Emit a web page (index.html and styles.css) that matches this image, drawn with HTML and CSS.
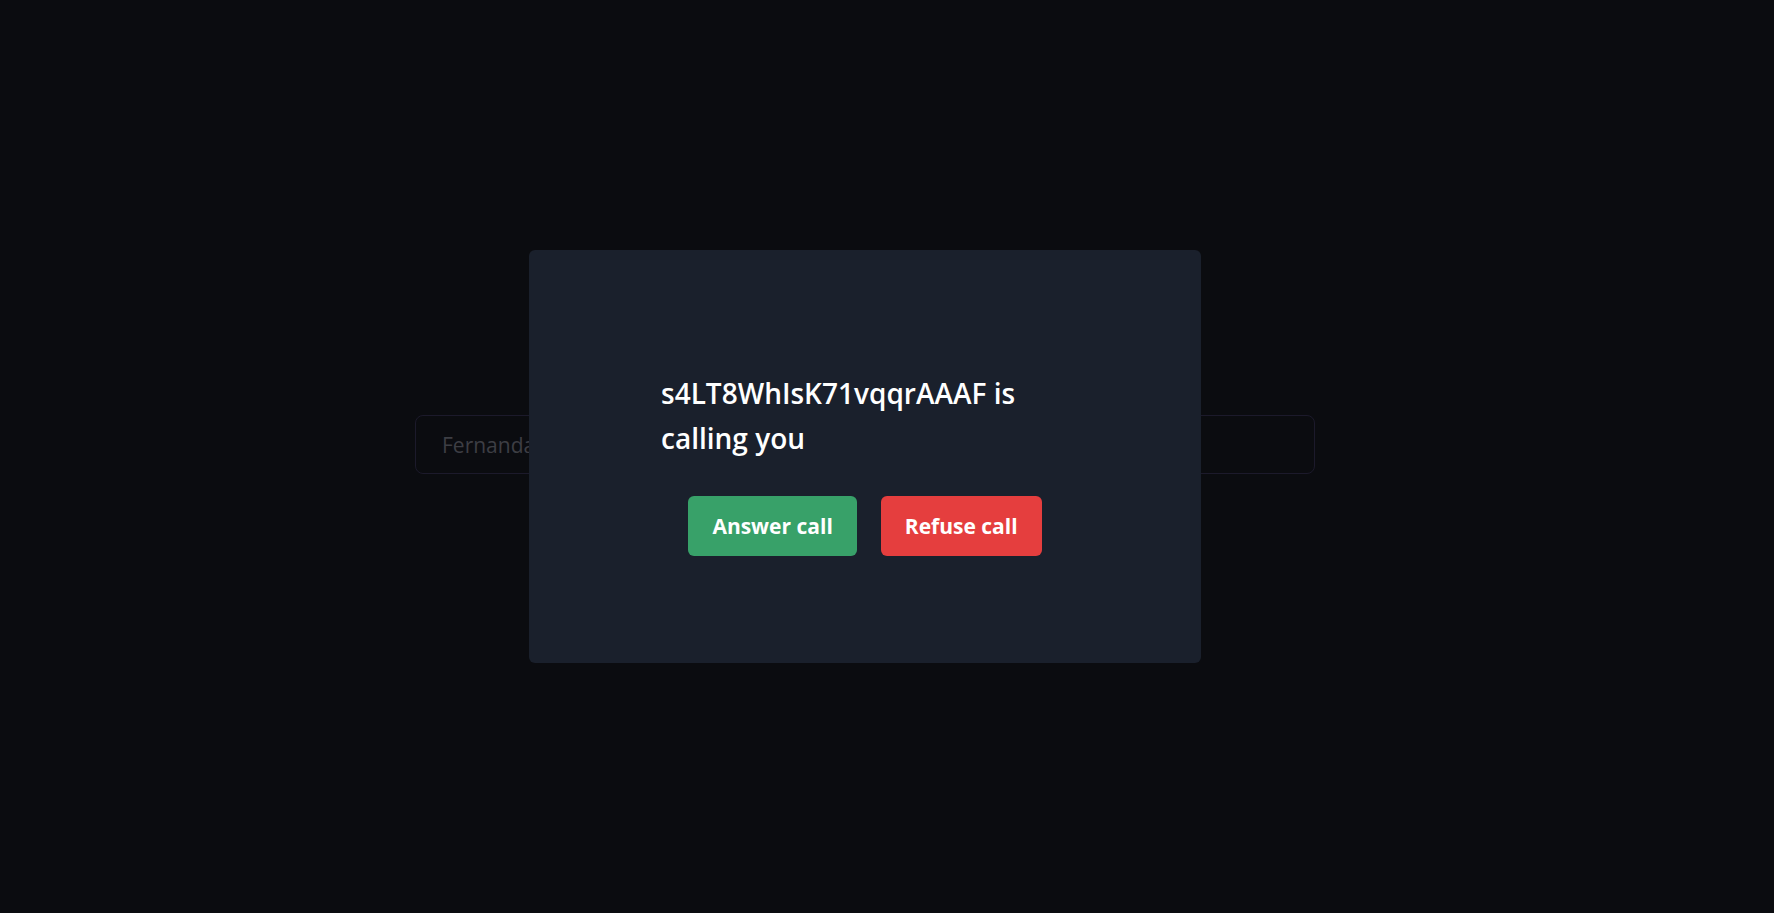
FILE: index.html
```html
<!DOCTYPE html>
<html>
<head>
  <title>Video call</title>
  <link rel="stylesheet" href="styles.css">
</head>
<body>
  <div class="page">
    <div class="join-form">
      <input class="name-input" type="text" placeholder="Fernanda">
    </div>
  </div>

  <!-- Incoming call modal -->
  <div class="modal-overlay">
    <div class="modal-content">
      <div class="modal-body">
        <p class="caller">s4LT8WhIsK71vqqrAAAF is calling you</p>
        <div class="actions">
          <button class="answer-btn">Answer call</button>
          <button class="refuse-btn">Refuse call</button>
        </div>
      </div>
    </div>
  </div>
</body>
</html>
```

FILE: styles.css
```css
    html, body {
      margin: 0;
      height: 100%;
    }
    body {
      background: #0b0c10;
      font-family: "Open Sans", "Noto Sans", sans-serif;
      color: #fff;
    }
    .page {
      height: 100%;
      display: flex;
      align-items: center;
      justify-content: center;
      padding-right: 44px;
      box-sizing: border-box;
    }
    .join-form {
      width: 900px;
      margin-bottom: 24px;
    }
    .name-input {
      width: 100%;
      height: 59px;
      box-sizing: border-box;
      padding: 0 26px;
      background: transparent;
      border: 1px solid #1c1a2b;
      border-radius: 8px;
      font-family: inherit;
      font-size: 21px;
      color: #e5e7eb;
      outline: none;
    }
    .name-input::placeholder {
      color: #3d3e44;
    }

    /* Modal */
    .modal-overlay {
      position: fixed;
      top: 0;
      left: 0;
      right: 44px;
      bottom: 0;
      display: flex;
      justify-content: center;
      align-items: center;
    }
    .modal-content {
      width: 672px;
      height: 413px;
      background: #1a202c;
      border-radius: 6px;
      display: flex;
      justify-content: center;
    }
    .modal-body {
      width: 408px;
      padding-top: 121px;
    }
    .caller {
      margin: 0;
      font-size: 28px;
      font-weight: 600;
      line-height: 45px;
    }
    .actions {
      display: flex;
      justify-content: center;
      gap: 24px;
      margin-top: 35px;
    }
    .actions button {
      height: 60px;
      padding: 0 24px;
      border: none;
      border-radius: 6px;
      color: #fff;
      font-family: inherit;
      font-size: 21px;
      font-weight: 700;
      cursor: pointer;
    }
    .answer-btn {
      background: #38a169;
    }
    .refuse-btn {
      background: #e53e3e;
    }
```
